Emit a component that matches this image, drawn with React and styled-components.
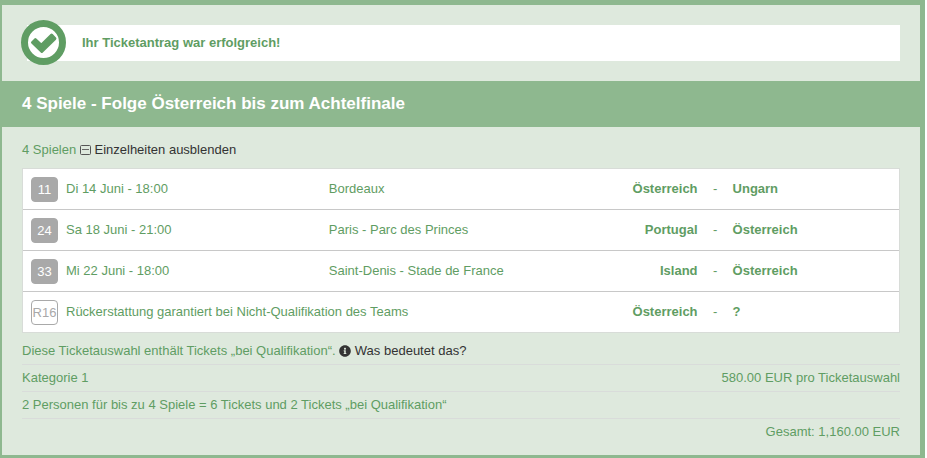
import React, { Component } from 'react'
import styled, { createGlobalStyle } from 'styled-components'
import { FaInfoCircle } from 'react-icons/fa'

const matches = [
  { id: '11', date: 'Di 14 Juni - 18:00', venue: 'Bordeaux', home: 'Österreich', away: 'Ungarn' },
  { id: '24', date: 'Sa 18 Juni - 21:00', venue: 'Paris - Parc des Princes', home: 'Portugal', away: 'Österreich' },
  { id: '33', date: 'Mi 22 Juni - 18:00', venue: 'Saint-Denis - Stade de France', home: 'Island', away: 'Österreich' },
  { id: 'R16', note: 'Rückerstattung garantiert bei Nicht-Qualifikation des Teams', home: 'Österreich', away: '?' },
]

const SuccessIcon = () => (
  <CheckSvg viewBox='0 0 45 45' aria-hidden='true'>
    <circle cx='22.5' cy='22.5' r='19' fill='#fff' stroke='#5f9d63' strokeWidth='7' />
    <path
      d='M14.3 19.7 L20.2 25.2 L30.6 15 L33.9 18.6 L20.8 31.4 L11.5 22.5 Z'
      fill='#5f9d63'
      stroke='#5f9d63'
      strokeWidth='3'
      strokeLinejoin='round'
    />
  </CheckSvg>
)

const CollapseIcon = () => (
  <CollapseSvg viewBox='0 0 11 11' aria-hidden='true'>
    <rect x='0.5' y='0.5' width='10' height='9' rx='1' fill='none' stroke='#555' />
    <path d='M2 4.5 H9' stroke='#666' />
  </CollapseSvg>
)

export default class App extends Component {
  constructor(props) {
    super(props)
    this.state = {
      open: true
    }

    this.toggleDetails = this.toggleDetails.bind(this)
  }

  toggleDetails() {
    this.setState({
      open: !this.state.open
    })
  }

  render() {
    const { open } = this.state
    return (
      <Frame>
        <GlobalStyle />
        <Banner>
          <SuccessIcon />
          <Message>Ihr Ticketantrag war erfolgreich!</Message>
        </Banner>

        <Title>4 Spiele - Folge Österreich bis zum Achtelfinale</Title>

        <Body>
          <Summary>
            4 Spielen{' '}
            <Toggle type='button' aria-expanded={open} onClick={this.toggleDetails}>
              <CollapseIcon /> {open ? 'Einzelheiten ausblenden' : 'Einzelheiten anzeigen'}
            </Toggle>
          </Summary>

          {open && (
            <Matches>
              <colgroup>
                <Col $width='43px' />
                <Col $width='30%' />
                <Col />
                <Col $width='13%' />
                <Col $width='35px' />
                <Col $width='19%' />
              </colgroup>
              <tbody>
                {matches.map(match => (
                  <MatchRow key={match.id}>
                    <BadgeCell>
                      <Badge $outline={!!match.note}>{match.id}</Badge>
                    </BadgeCell>
                    {match.note ? (
                      <Cell colSpan={2}>{match.note}</Cell>
                    ) : (
                      <>
                        <Cell>{match.date}</Cell>
                        <Cell>{match.venue}</Cell>
                      </>
                    )}
                    <Team $align='right'>{match.home}</Team>
                    <Cell $align='center'>-</Cell>
                    <Team>{match.away}</Team>
                  </MatchRow>
                ))}
              </tbody>
            </Matches>
          )}

          <Line>
            <span>
              Diese Ticketauswahl enthält Tickets „bei Qualifikation“.{' '}
              <InfoLink href='#info'>
                <InfoIcon /> Was bedeutet das?
              </InfoLink>
            </span>
          </Line>
          <Line>
            <span>Kategorie 1</span>
            <span>580.00 EUR pro Ticketauswahl</span>
          </Line>
          <Line>
            <span>2 Personen für bis zu 4 Spiele = 6 Tickets und 2 Tickets „bei Qualifikation“</span>
          </Line>
          <Line $end>
            <span>Gesamt: 1,160.00 EUR</span>
          </Line>
        </Body>
      </Frame>
    )
  }
}

const GlobalStyle = createGlobalStyle`
  body {
    margin: 0;
    background: #fff;
    font-family: "Liberation Sans", Arial, sans-serif;
    font-size: 13px;
    line-height: 18px;
    color: #5f9d63;
  }
`

const Frame = styled.div`
  margin-right: 2px;
  padding: 5px 5px 3px 2px;
  background: #8eb88f;
`

const Banner = styled.div`
  display: flex;
  align-items: center;
  padding: 15px 20px 16px 19px;
  background: #dee9dd;
`

const CheckSvg = styled.svg`
  flex: none;
  width: 45px;
  height: 45px;
  margin-right: -39px;
  z-index: 1;
`

const Message = styled.div`
  flex: 1;
  padding: 9px 55px;
  background: #fff;
  font-weight: bold;
`

const Title = styled.h2`
  margin: 0;
  padding: 13px 20px;
  color: #fff;
  font-size: 17px;
  line-height: 20px;
`

const Body = styled.div`
  padding: 14px 20px 10px;
  background: #dee9dd;
`

const Summary = styled.div`
  margin-bottom: 9px;
`

const Toggle = styled.button`
  padding: 0;
  border: 0;
  background: none;
  color: #333;
  font: inherit;
  cursor: pointer;
`

const CollapseSvg = styled.svg`
  width: 11px;
  height: 11px;
  vertical-align: -2px;
`

const Matches = styled.table`
  width: 100%;
  margin-bottom: 9px;
  border: 1px solid #d8dcd8;
  border-collapse: separate;
  border-spacing: 0;
  table-layout: fixed;
  background: #fff;
`

const Col = styled.col`
  width: ${props => props.$width || 'auto'};
`

const MatchRow = styled.tr`
  & + & > td {
    border-top: 1px solid #c8c8c8;
  }
`

const Cell = styled.td`
  height: 40px;
  padding: 0;
  text-align: ${props => props.$align || 'left'};
`

const BadgeCell = styled(Cell)`
  padding-left: 8px;
`

const Team = styled(Cell)`
  font-weight: bold;
`

const Badge = styled.span`
  display: flex;
  align-items: center;
  justify-content: center;
  box-sizing: border-box;
  width: 27px;
  height: 25px;
  padding-top: 2px;
  border: 1px solid #a9a9a9;
  border-radius: 4px;
  background: ${props => (props.$outline ? '#fff' : '#a9a9a9')};
  color: ${props => (props.$outline ? '#a9a9a9' : '#fff')};
`

const Line = styled.div`
  display: flex;
  justify-content: ${props => (props.$end ? 'flex-end' : 'space-between')};
  padding-bottom: 4px;

  & + & {
    padding-top: 4px;
    border-top: 1px solid #d9dcda;
  }
`

const InfoLink = styled.a`
  color: #333;
  text-decoration: none;
`

const InfoIcon = styled(FaInfoCircle)`
  width: 12px;
  height: 12px;
  vertical-align: -2px;
`
